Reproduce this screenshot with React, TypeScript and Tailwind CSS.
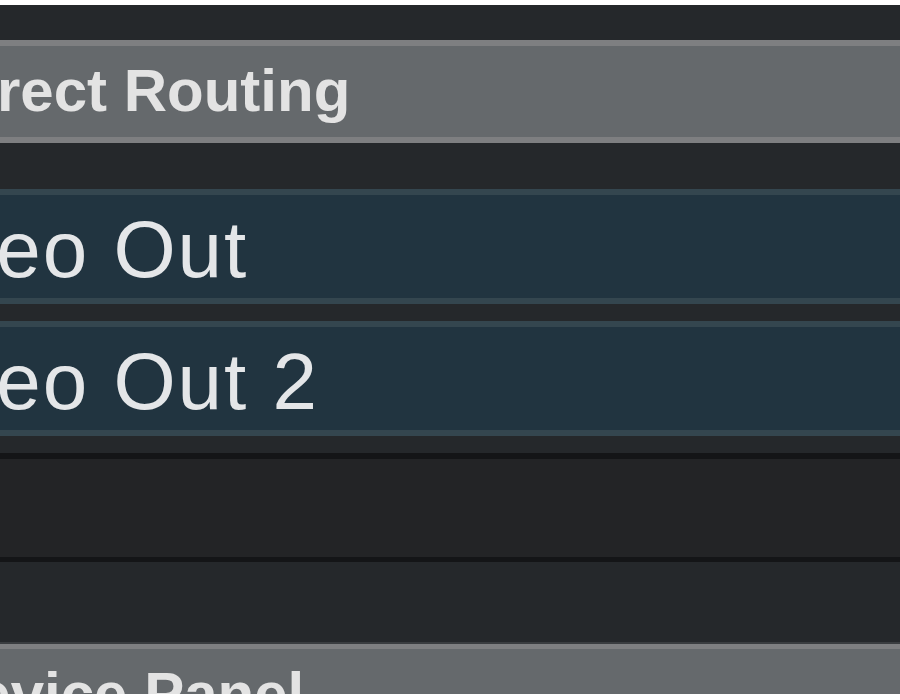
const font = { fontFamily: '"Liberation Sans", Arial, sans-serif' };

function SectionHeader({ title }: { title: string }) {
  return (
    <div className="h-[103px] shrink-0 border-y-[6px] border-[#7e7f81] bg-[#65696c] overflow-hidden">
      <div className="pt-[9px] -ml-[63px] whitespace-nowrap text-[60px] font-bold leading-[72px] text-[#e3e3e3]">
        {title}
      </div>
    </div>
  );
}

function OutputRow({ label }: { label: string }) {
  return (
    <div className="h-[115px] shrink-0 border-y-[6px] border-[#34464f] bg-[#213440] overflow-hidden">
      <div className="pt-[9px] -ml-[124px] whitespace-nowrap text-[80px] tracking-[2px] leading-[92px] text-[#e4e6e8]">
        {label}
      </div>
    </div>
  );
}

export default function App() {
  return (
    <div className="flex h-[700px] w-[900px] flex-col overflow-hidden bg-white" style={font}>
      <div className="h-[5px] shrink-0 bg-white" />
      <div className="h-[35px] shrink-0 bg-[#25282b]" />
      <SectionHeader title="Direct Routing" />
      <div className="h-[46px] shrink-0 bg-[#25282b]" />
      <OutputRow label="Video Out" />
      <div className="h-[17px] shrink-0 bg-[#25282b]" />
      <OutputRow label="Video Out 2" />
      <div className="h-[17px] shrink-0 bg-[#25282b]" />
      <div className="h-[6px] shrink-0 bg-[#141517]" />
      <div className="h-[98px] shrink-0 bg-[#232426]" />
      <div className="h-[5px] shrink-0 bg-[#141517]" />
      <div className="h-[80px] shrink-0 bg-[#25282b]" />
      <div className="h-[2px] shrink-0 bg-[#3a3d40]" />
      <div className="h-[50px] shrink-0 border-t-[5px] border-[#7e7f81] bg-[#65696c] overflow-hidden">
        <div className="pt-[9px] -ml-[66px] whitespace-nowrap text-[60px] font-bold leading-[72px] text-[#e3e3e3]">
          Device Panel
        </div>
      </div>
      <div className="flex-1 bg-white" />
    </div>
  );
}
